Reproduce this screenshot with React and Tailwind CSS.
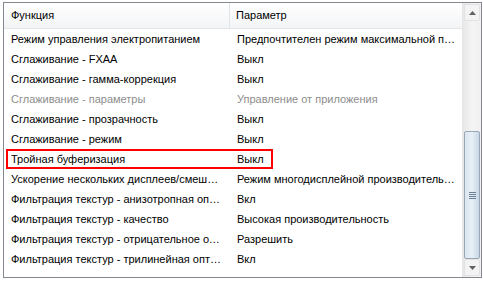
export default function App() {
  const rows = [
    ["Режим управления электропитанием", "Предпочтителен режим максимальной производительности"],
    ["Сглаживание - FXAA", "Выкл"],
    ["Сглаживание - гамма-коррекция", "Выкл"],
    ["Сглаживание - параметры", "Управление от приложения", true],
    ["Сглаживание - прозрачность", "Выкл"],
    ["Сглаживание - режим", "Выкл"],
    ["Тройная буферизация", "Выкл", false, true],
    ["Ускорение нескольких дисплеев/смешанных ГП", "Режим многодисплейной производительности"],
    ["Фильтрация текстур - анизотропная оптимизация", "Вкл"],
    ["Фильтрация текстур - качество", "Высокая производительность"],
    ["Фильтрация текстур - отрицательное отклонение УД", "Разрешить"],
    ["Фильтрация текстур - трилинейная оптимизация", "Вкл"],
  ];
  return (
    <div className="w-[483px] h-[282px] bg-white pl-[3px] pt-[2px] text-[11px] text-black" style={{ fontFamily: '"Liberation Sans", Arial, sans-serif' }}>
      <div className="w-[479px] h-[276px] border border-[#828790] flex overflow-hidden">
        <div className="w-[458px] flex flex-col">
          <div className="h-[26px] flex bg-gradient-to-b from-white to-[#f3f4f6] border-b border-[#e5e5e5]">
            <div className="w-[226px] pl-[7px] flex items-center border-r border-[#e0e3e8]">Функция</div>
            <div className="flex-1 pl-[6px] flex items-center">Параметр</div>
          </div>
          <div className="flex flex-col">
            {rows.map(([a, b, grey, sel], i) => (
              <div key={i} className={`h-[20px] flex items-center pl-[2px] ${grey ? "text-[#8d8d8d]" : ""}`}>
                <div className={`flex h-[20px] items-center ${sel ? "border-2 border-[#ff0000]" : "border-2 border-transparent"}`}>
                  <div className="w-[222px] pl-[3px] pr-[6px] whitespace-nowrap overflow-hidden text-ellipsis">{a}</div>
                  <div className={`${sel ? "w-[41px] pr-[1px]" : "w-[230px] pr-[4px]"} pl-[7px] whitespace-nowrap overflow-hidden text-ellipsis`}>{b}</div>
                </div>
              </div>
            ))}
          </div>
        </div>
        <div className="w-[19px] flex flex-col bg-gradient-to-r from-[#e8e8e8] via-[#f4f4f4] to-[#f0f0f0] border-l border-[#e6e6e6] p-[1px]">
          <div className="h-[17px] flex items-center justify-center border border-[#e2e2e2] bg-[#f3f3f3] rounded-[2px]">
            <svg width="7" height="4" viewBox="0 0 7 4"><path d="M0 4 L3.5 0 L7 4 Z" fill="#606060" /></svg>
          </div>
          <div className="h-[110px]"></div>
          <div className="flex-1 rounded-[2px] border border-[#9aa7b6] bg-gradient-to-r from-[#dbe6f0] via-[#e8f0f7] to-[#c7d6e6] flex items-center justify-center">
            <div className="flex flex-col gap-[1px]">
              <div className="w-[7px] h-[1px] bg-[#6b7f95]"></div>
              <div className="w-[7px] h-[1px] bg-[#6b7f95]"></div>
              <div className="w-[7px] h-[1px] bg-[#6b7f95]"></div>
              <div className="w-[7px] h-[1px] bg-[#6b7f95]"></div>
            </div>
          </div>
          <div className="h-[17px] flex items-center justify-center border border-[#e2e2e2] bg-[#f3f3f3] rounded-[2px]">
            <svg width="7" height="4" viewBox="0 0 7 4"><path d="M0 0 L3.5 4 L7 0 Z" fill="#606060" /></svg>
          </div>
        </div>
      </div>
    </div>
  );
}
